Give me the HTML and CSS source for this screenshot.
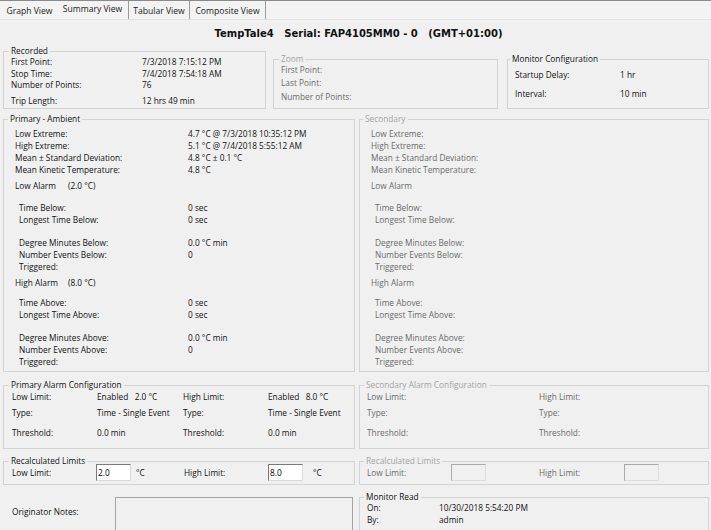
FILE: index.html
```html
<!DOCTYPE html>
<html>
<head>
<meta charset="utf-8">
<title>Summary View</title>
<link rel="stylesheet" href="styles.css">
</head>
<body>
<div class="tabs">
  <div class="tab t1">Graph View</div>
  <div class="tab t2 sel">Summary View</div>
  <div class="tab t3">Tabular View</div>
  <div class="tab t4">Composite View</div>
</div>
<div class="page">
  <div class="title">TempTale4   Serial: FAP4105MM0 - 0   (GMT+01:00)</div>

  <div class="toprow">
    <fieldset class="gb recorded">
      <legend>Recorded</legend>
      <div class="kv r1"><span class="k">First Point:</span><span>7/3/2018 7:15:12 PM</span></div>
      <div class="kv r2"><span class="k">Stop Time:</span><span>7/4/2018 7:54:18 AM</span></div>
      <div class="kv r3"><span class="k">Number of Points:</span><span>76</span></div>
      <div class="kv r4"><span class="k">Trip Length:</span><span>12 hrs 49 min</span></div>
    </fieldset>
    <fieldset class="gb zoom dis">
      <legend>Zoom</legend>
      <div class="kv z1"><span class="k">First Point:</span></div>
      <div class="kv z2"><span class="k">Last Point:</span></div>
      <div class="kv z3"><span class="k">Number of Points:</span></div>
    </fieldset>
    <fieldset class="gb monitor">
      <legend>Monitor Configuration</legend>
      <div class="kv m1"><span class="k">Startup Delay:</span><span>1 hr</span></div>
      <div class="kv m2"><span class="k">Interval:</span><span>10 min</span></div>
    </fieldset>
  </div>

  <div class="cols stats-row">
    <fieldset class="gb stats">
      <legend>Primary - Ambient</legend>
      <div class="st s1"><span class="k">Low Extreme:</span><span>4.7 °C @ 7/3/2018 10:35:12 PM</span></div>
      <div class="st"><span class="k">High Extreme:</span><span>5.1 °C @ 7/4/2018 5:55:12 AM</span></div>
      <div class="st"><span class="k">Mean ± Standard Deviation:</span><span>4.8 °C ± 0.1 °C</span></div>
      <div class="st"><span class="k">Mean Kinetic Temperature:</span><span>4.8 °C</span></div>
      <div class="st alarm"><span class="an">Low Alarm</span><span>(2.0 °C)</span></div>
      <div class="st ind g1"><span class="k">Time Below:</span><span>0 sec</span></div>
      <div class="st ind"><span class="k">Longest Time Below:</span><span>0 sec</span></div>
      <div class="st ind g2"><span class="k">Degree Minutes Below:</span><span>0.0 °C min</span></div>
      <div class="st ind"><span class="k">Number Events Below:</span><span>0</span></div>
      <div class="st ind"><span class="k">Triggered:</span></div>
      <div class="st alarm a2"><span class="an">High Alarm</span><span>(8.0 °C)</span></div>
      <div class="st ind g3"><span class="k">Time Above:</span><span>0 sec</span></div>
      <div class="st ind"><span class="k">Longest Time Above:</span><span>0 sec</span></div>
      <div class="st ind g2"><span class="k">Degree Minutes Above:</span><span>0.0 °C min</span></div>
      <div class="st ind"><span class="k">Number Events Above:</span><span>0</span></div>
      <div class="st ind"><span class="k">Triggered:</span></div>
    </fieldset>
    <fieldset class="gb stats dis">
      <legend>Secondary</legend>
      <div class="st s1"><span class="k">Low Extreme:</span></div>
      <div class="st"><span class="k">High Extreme:</span></div>
      <div class="st"><span class="k">Mean ± Standard Deviation:</span></div>
      <div class="st"><span class="k">Mean Kinetic Temperature:</span></div>
      <div class="st alarm"><span class="an">Low Alarm</span></div>
      <div class="st ind g1"><span class="k">Time Below:</span></div>
      <div class="st ind"><span class="k">Longest Time Below:</span></div>
      <div class="st ind g2"><span class="k">Degree Minutes Below:</span></div>
      <div class="st ind"><span class="k">Number Events Below:</span></div>
      <div class="st ind"><span class="k">Triggered:</span></div>
      <div class="st alarm a2"><span class="an">High Alarm</span></div>
      <div class="st ind g3"><span class="k">Time Above:</span></div>
      <div class="st ind"><span class="k">Longest Time Above:</span></div>
      <div class="st ind g2"><span class="k">Degree Minutes Above:</span></div>
      <div class="st ind"><span class="k">Number Events Above:</span></div>
      <div class="st ind"><span class="k">Triggered:</span></div>
    </fieldset>
  </div>

  <div class="cols cfg-row">
    <fieldset class="gb cfg">
      <legend>Primary Alarm Configuration</legend>
      <div class="cg c1"><span>Low Limit:</span><span>Enabled&nbsp;&nbsp; 2.0 °C</span><span>High Limit:</span><span>Enabled&nbsp;&nbsp; 8.0 °C</span></div>
      <div class="cg c2"><span>Type:</span><span>Time - Single Event</span><span>Type:</span><span>Time - Single Event</span></div>
      <div class="cg c3"><span>Threshold:</span><span>0.0 min</span><span>Threshold:</span><span>0.0 min</span></div>
    </fieldset>
    <fieldset class="gb cfg sec dis">
      <legend>Secondary Alarm Configuration</legend>
      <div class="cg2 c1"><span>Low Limit:</span><span>High Limit:</span></div>
      <div class="cg2 c2"><span>Type:</span><span>Type:</span></div>
      <div class="cg2 c3"><span>Threshold:</span><span>Threshold:</span></div>
    </fieldset>
  </div>

  <div class="cols recalc-row">
    <fieldset class="gb recalc">
      <legend>Recalculated Limits</legend>
      <div class="rl">
        <span class="rl-lbl">Low Limit:</span>
        <span class="inp">2.0</span>
        <span class="unit u1">°C</span>
        <span class="rl-lbl">High Limit:</span>
        <span class="inp">8.0</span>
        <span class="unit u2">°C</span>
      </div>
    </fieldset>
    <fieldset class="gb recalc sec dis">
      <legend>Recalculated Limits</legend>
      <div class="rl">
        <span class="rl-lbl">Low Limit:</span>
        <span class="inp off"></span>
        <span class="spacer"></span>
        <span class="rl-lbl hl">High Limit:</span>
        <span class="inp off"></span>
      </div>
    </fieldset>
  </div>

  <div class="cols bottom-row">
    <div class="notes">
      <span class="notes-lbl">Originator Notes:</span>
      <div class="notes-box"></div>
    </div>
    <fieldset class="gb read">
      <legend>Monitor Read</legend>
      <div class="kv rd"><span class="k">On:</span><span>10/30/2018 5:54:20 PM</span></div>
      <div class="kv rd"><span class="k">By:</span><span>admin</span></div>
    </fieldset>
  </div>
</div>
</body>
</html>
```

FILE: styles.css
```css
* { box-sizing: border-box; }

body {
  margin: 0;
  width: 711px;
  height: 530px;
  overflow: hidden;
  background: #f0f0f0;
  font-family: "Open Sans", "Segoe UI", sans-serif;
  font-size: 8.3px;
  color: #101010;
}

/* ---------- tabs ---------- */
.tabs {
  display: flex;
  height: 20px;
  padding-left: 2px;
  border-top: 1px solid #8a8a8a;
  border-bottom: 1px solid #e2e2e2;
  background: #f3f3f3;
}
.tab {
  font-size: 8.6px;
  line-height: 18px;
  padding-top: 1px;
  text-align: center;
  color: #1a1a1a;
}
.t1 { width: 55px; }
.t2 { width: 72px; border-right: 1px solid #9a9a9a; }
.t3 { width: 61px; border-right: 1px solid #9a9a9a; }
.t4 { width: 76px; border-right: 1px solid #9a9a9a; }
.tab.sel { padding-top: 0; line-height: 17px; }

/* ---------- page ---------- */
.page { padding: 0 2px 0 3px; }

.title {
  height: 26px;
  line-height: 25px;
  padding-top: 1px;
  text-align: center;
  padding-left: 5px;
  white-space: pre;
  font-family: "DejaVu Sans", Verdana, sans-serif;
  font-weight: bold;
  font-size: 10px;
  color: #111;
}

/* ---------- group boxes ---------- */
.gb {
  margin: 0;
  padding: 0;
  min-width: 0;
  border: 1px solid #d3d3d3;
}
.gb legend {
  padding: 0 2px;
  margin-left: 5px;
  line-height: 10px;
  font-size: 8.3px;
}
.dis { color: #6a6a6a; }
.dis legend { color: #a3a3a3; }

.kv { display: flex; line-height: 11px; padding-left: 7px; white-space: nowrap; }

/* top row */
.toprow { display: flex; align-items: stretch; }
.recorded { width: 263px; padding-bottom: 2px; }
.recorded .k { width: 131px; }
.recorded .r2 { margin-top: 1px; }
.recorded .r4 { margin-top: 5px; }

.zoom { width: 225px; margin: 8px 0 0 7px; }
.zoom .z2 { margin-top: 2px; }
.zoom .z3 { margin-top: 3px; }

.monitor { flex: 1; margin: 8px 0 0 9px; }
.monitor legend { margin-left: 2px; }
.monitor .k { width: 105px; }
.monitor .m1 { margin-top: 5px; }
.monitor .m2 { margin-top: 8px; }

/* two column rows */
.cols {
  display: grid;
  grid-template-columns: 352px 350px;
  column-gap: 4px;
}

.stats-row { margin-top: 5px; }
.stats { padding-bottom: 3px; }
.stats legend { margin-left: 4px; }
.stats.dis legend { margin-left: 3px; }
.st { display: flex; line-height: 12px; padding-left: 11px; white-space: nowrap; }
.st .k { width: 173px; }
.st.ind { padding-left: 15px; }
.st.ind .k { width: 169px; }
.st .an { width: 53px; }
.st.s1 { margin-top: 4px; }
.st.alarm { margin-top: 4px; }
.st.a2 { margin-top: 4px; }
.st.g1 { margin-top: 10px; }
.st.g2 { margin-top: 11px; }
.st.g3 { margin-top: 8px; }

/* alarm configuration */
.cfg-row { margin-top: 8px; }
.cfg { padding: 0 0 9px 8px; }
.cfg legend { margin-left: -3px; }
.cfg.sec { padding-left: 7px; }
.cg { display: grid; grid-template-columns: 85px 86px 85px 1fr; line-height: 12px; white-space: nowrap; }
.cg2 { display: grid; grid-template-columns: 172px 1fr; line-height: 12px; white-space: nowrap; }
.c1 { margin-top: 1px; }
.c2 { margin-top: 4px; }
.c3 { margin-top: 8px; }

/* recalculated limits */
.recalc-row { margin-top: 7px; }
.recalc { padding: 0 0 4px 8px; }
.recalc legend { margin-left: -3px; }
.recalc.sec { padding-left: 7px; }
.rl { display: flex; align-items: center; height: 16px; margin-top: -2px; white-space: nowrap; }
.rl-lbl { width: 84px; }
.inp {
  width: 35px;
  height: 17px;
  line-height: 15px;
  padding-left: 1px;
  background: #fff;
  border: 1px solid;
  border-color: #7a7a7a #d9d9d9 #d9d9d9 #7a7a7a;
  color: #000;
}
.inp.off { background: #f0f0f0; border-color: #a9a9a9 #dcdcdc #dcdcdc #a9a9a9; }
.unit.u1 { margin-left: 5px; width: 48px; }
.unit.u2 { margin-left: 10px; }
.rl-lbl.hl { width: 85px; }
.spacer { width: 53px; }

/* bottom */
.bottom-row { margin-top: 7px; }
.notes { display: flex; align-items: flex-start; padding-left: 9px; }
.notes-lbl { width: 103px; margin-top: 14px; line-height: 12px; }
.notes-box {
  width: 238px;
  height: 40px;
  margin-top: 5px;
  border: 1px solid #a5a5a5;
  border-bottom: none;
}
.read { padding-bottom: 1px; }
.read legend { margin-left: 4px; }
.read .kv { line-height: 12px; }
.read .k { width: 72px; }
```
